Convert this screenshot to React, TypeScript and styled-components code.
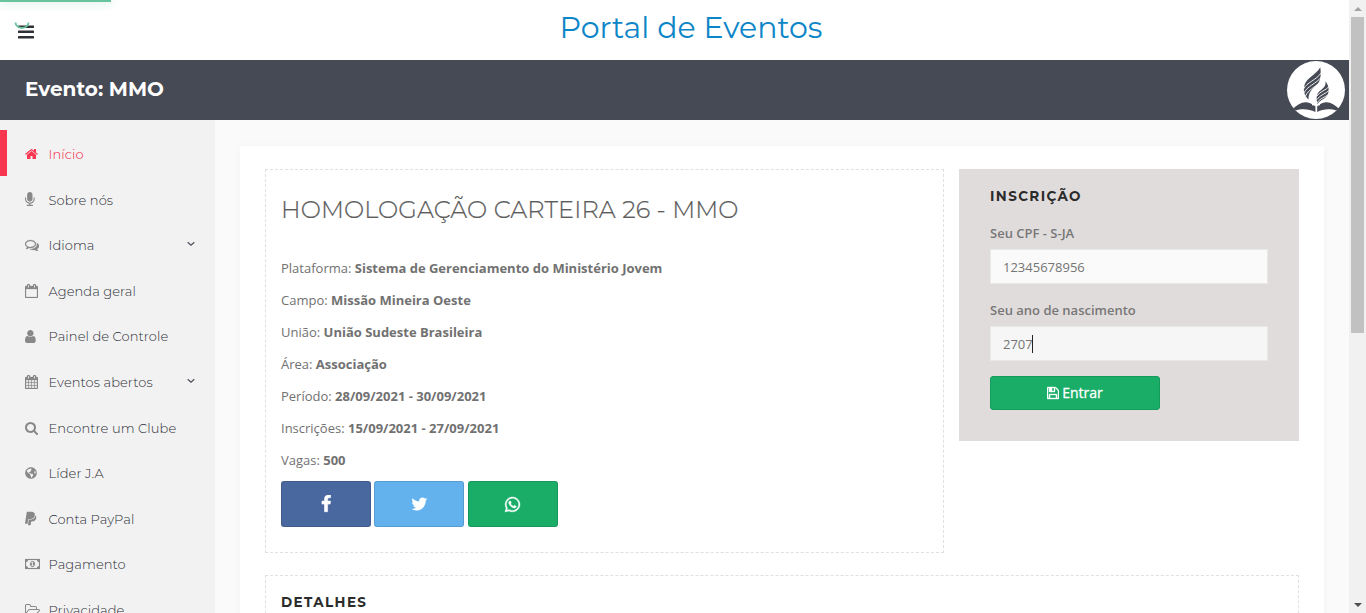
import React from "react";
import styled, { createGlobalStyle } from "styled-components";
import { FaWhatsapp, FaPaypal, FaGlobeAmericas } from "react-icons/fa";

const GlobalStyle = createGlobalStyle`
  * { box-sizing: border-box; }
  html, body { margin: 0; height: 613px; overflow: hidden; }
  body { background: #fafafa; font-family: "Open Sans", sans-serif; font-size: 13px; color: #717171; }
`;

const display = `"Montserrat", "Inter", sans-serif`;

const Shell = styled.div`
  display: flex;
  height: 613px;
  overflow: hidden;
  position: relative;
`;
const Page = styled.div`
  flex: 1;
  display: flex;
  flex-direction: column;
  min-width: 0;
`;

const Progress = styled.div`
  position: absolute;
  top: 0;
  left: 0;
  width: 111px;
  height: 2px;
  background: #68c39f;
  box-shadow: 0 0 10px rgba(104, 195, 159, 0.7);
`;
const Spinner = styled.svg`
  position: absolute;
  top: 14px;
  left: 14px;
`;

const Header = styled.header`
  height: 60px;
  flex: none;
  background: #fff;
  display: grid;
  grid-template-columns: 60px 1fr 27px;
  align-items: center;
`;
const MenuButton = styled.button`
  border: 0;
  background: none;
  padding: 3px 0 0 18px;
  display: flex;
`;
const PortalTitle = styled.h1`
  margin: 0;
  padding-bottom: 5px;
  font: 400 30px/40px ${display};
  color: #0d86c8;
  text-align: center;
`;

const EventBar = styled.div`
  height: 60px;
  flex: none;
  background: #464a54;
  display: flex;
  align-items: center;
  justify-content: space-between;
  padding: 0 4px 0 25px;
`;
const EventName = styled.h2`
  margin: 0;
  padding-bottom: 3px;
  font: 700 20px/30px ${display};
  color: #fff;
`;

const Body = styled.div`
  flex: 1;
  min-height: 0;
  display: flex;
`;
const Sidebar = styled.nav`
  width: 215px;
  flex: none;
  background: #f2f2f2;
  padding-top: 10px;
  overflow: hidden;
`;
const NavItem = styled.a<{ $active?: boolean }>`
  display: flex;
  align-items: center;
  height: 45.6px;
  padding: 2.3px 20px 0 18px;
  border-left: 7px solid ${(p) => (p.$active ? "#f8364f" : "transparent")};
  color: ${(p) => (p.$active ? "#f8364f" : "#888")};
`;
const NavIcon = styled.span`
  width: 23.5px;
  display: flex;
`;
const NavText = styled.span<{ $active?: boolean }>`
  flex: 1;
  white-space: nowrap;
  font: 300 13px/20px ${display};
  letter-spacing: 0.09px;
  color: ${(p) => (p.$active ? "#f8203c" : "#2b2e36")};
`;

const Main = styled.main`
  flex: 1;
  min-width: 0;
  padding: 26px 25px 0;
`;
const Card = styled.section`
  background: #fff;
  height: 600px;
  padding: 23px 25px;
  box-shadow: 0 0 8px rgba(0, 0, 0, 0.03);
`;
const Columns = styled.div`
  display: grid;
  grid-template-columns: 679px 340px;
  gap: 15px;
  align-items: start;
`;
const Box = styled.div`
  border: 1px dashed #e0e0e0;
  padding: 15px;
`;
const EventBox = styled(Box)`
  height: 384px;
`;
const DetailsBox = styled(Box)`
  margin-top: 22px;
  padding-top: 14px;
  height: 200px;
`;
const BoxTitle = styled.h2`
  margin: 0 0 17px;
  font: 300 24px/50px ${display};
  letter-spacing: 0.12px;
  color: #5c5c5c;
  -webkit-text-stroke: 0.2px #5c5c5c;
  white-space: nowrap;
`;
const Info = styled.p`
  margin: 0;
  line-height: 32px;
  b { font-weight: 700; }
`;
const Share = styled.div`
  display: flex;
  gap: 3.4px;
  margin-top: 5px;
`;
const ShareButton = styled.button<{ $bg: string }>`
  width: 90px;
  height: 46px;
  padding: 0;
  display: flex;
  align-items: center;
  justify-content: center;
  color: #fff;
  background: ${(p) => p.$bg};
  border: 1px solid rgba(0, 0, 0, 0.12);
  border-radius: 3px;
`;
const SectionTitle = styled.h3`
  margin: 0;
  font: 700 13.5px/24px ${display};
  letter-spacing: 1.4px;
  color: #2b2b2b;
`;

const Enroll = styled.form`
  background: #e1dcdc;
  height: 272px;
  padding: 15px 31px 0 31px;
`;
const Label = styled.label`
  display: block;
  font-weight: 600;
  line-height: 20px;
  color: #777;
`;
const FieldGroup = styled.div`
  padding-top: 15px;
`;
const FieldGroupSpaced = styled(FieldGroup)`
  padding-top: 16px;
`;
const Field = styled.div<{ $focused?: boolean }>`
  margin-top: 6px;
  height: 35px;
  display: flex;
  align-items: center;
  padding: 0 12px;
  border: 1px solid #e9e8e8;
  background: ${(p) => (p.$focused ? "#f6f6f6" : "#fafafa")};
  color: #757575;
`;
const Caret = styled.span`
  width: 1px;
  height: 18px;
  margin-left: -1px;
  background: #222;
`;
const Submit = styled.button`
  margin-top: 15px;
  width: 170px;
  height: 34px;
  padding: 0 0 1px;
  display: flex;
  align-items: center;
  justify-content: center;
  gap: 3px;
  background: #19ad68;
  border: 1px solid #159b5c;
  border-radius: 3px;
  color: #fff;
  font: 500 14px "Open Sans", sans-serif;
  -webkit-text-stroke: 0.3px #fff;
`;

const Scrollbar = styled.div`
  width: 17px;
  flex: none;
  background: #f1f1f1;
  display: flex;
  flex-direction: column;
  align-items: center;
`;
const ScrollArrow = styled.div`
  height: 17px;
  display: flex;
  align-items: center;
`;
const Thumb = styled.div`
  width: 13px;
  height: 316px;
  background: #c1c1c1;
  margin-bottom: auto;
`;

const CAL_FRAME =
  "M512 448v-288q0-13-9.5-22.5t-22.5-9.5h-64q-13 0-22.5 9.5t-9.5 22.5v288q0 13 9.5 22.5t22.5 9.5h64q13 0 22.5-9.5t9.5-22.5zm768 0v-288q0-13-9.5-22.5t-22.5-9.5h-64q-13 0-22.5 9.5t-9.5 22.5v288q0 13 9.5 22.5t22.5 9.5h64q13 0 22.5-9.5t9.5-22.5zm384-64v1280q0 52-38 90t-90 38h-1408q-52 0-90-38t-38-90v-1280q0-52 38-90t90-38h128v-96q0-66 47-113t113-47h64q66 0 113 47t47 113v96h384v-96q0-66 47-113t113-47h64q66 0 113 47t47 113v96h128q52 0 90 38t38 90z";

const glyphs: Record<string, { x: number; w: number; d: string }> = {
  home: { x: 64, w: 1664, d: "M1472 992v480q0 26-19 45t-45 19h-384v-384h-256v384h-384q-26 0-45-19t-19-45v-480q0-1 .5-3t.5-3l575-474 575 474q1 2 1 6zm223-69l-62 74q-8 9-21 11h-3q-13 0-21-7l-692-577-692 577q-12 8-24 7-13-2-21-11l-62-74q-8-10-7-23.5t11-21.5l719-599q32-26 76-26t76 26l244 204v-195q0-14 9-23t23-9h192q14 0 23 9t9 23v408l219 182q10 8 11 21.5t-7 23.5z" },
  mic: { x: 320, w: 1152, d: "M1472 704v128q0 221-147.5 384.5t-364.5 187.5v132h256q26 0 45 19t19 45-19 45-45 19h-640q-26 0-45-19t-19-45 19-45 45-19h256v-132q-217-24-364.5-187.5t-147.5-384.5v-128q0-26 19-45t45-19 45 19 19 45v128q0 185 131.5 316.5t316.5 131.5 316.5-131.5 131.5-316.5v-128q0-26 19-45t45-19 45 19 19 45zm-256-384v512q0 132-94 226t-226 94-226-94-94-226v-512q0-132 94-226t226-94 226 94 94 226z" },
  comments: { x: 0, w: 1792, d: "M704 384q-153 0-286 52t-211.5 141-78.5 191q0 82 53 158t149 132l97 56-35 84q34-20 62-39l44-31 53 10q78 14 153 14 153 0 286-52t211.5-141 78.5-191-78.5-191-211.5-141-286-52zm0-128q191 0 353.5 68.5t256.5 186.5 94 257-94 257-256.5 186.5-353.5 68.5q-86 0-176-16-124 88-278 128-36 9-86 16h-3q-11 0-20.5-8t-11.5-21q-1-3-1-6.5t.5-6.5 2-6l2.5-5 3.5-5.5 4-5 4.5-5 4-4.5q5-6 23-25t26-29.5 22.5-29 25-38.5 20.5-44q-124-72-195-177t-71-224q0-139 94-257t256.5-186.5 353.5-68.5zm822 1169q10 24 20.5 44t25 38.5 22.5 29 26 29.5 23 25q1 1 4 4.5t4.5 5 4 5 3.5 5.5l2.5 5 2 6 .5 6.5-1 6.5q-3 14-13 22t-22 7q-50-7-86-16-154-40-278-128-90 16-176 16-271 0-472-132 58 4 88 4 161 0 309-45t264-129q125-92 192-212t67-254q0-77-23-152 129 71 204 178t75 230q0 120-71 224.5t-195 176.5z" },
  calendarO: { x: 0, w: 1664, d: CAL_FRAME + "M128 1664h1408v-1024h-1408z" },
  user: { x: 256, w: 1280, d: "M1536 1399q0 109-62.5 187t-150.5 78h-854q-88 0-150.5-78t-62.5-187q0-85 8.5-160.5t31.5-152 58.5-131 94-89 134.5-34.5q131 128 313 128t313-128q76 0 134.5 34.5t94 89 58.5 131 31.5 152 8.5 160.5zm-256-887q0 159-112.5 271.5t-271.5 112.5-271.5-112.5-112.5-271.5 112.5-271.5 271.5-112.5 271.5 112.5 112.5 271.5z" },
  calendar: { x: 0, w: 1664, d: CAL_FRAME + "M128 1664h288v-288h-288zM480 1664h320v-288h-320zM864 1664h320v-288h-320zM1248 1664h288v-288h-288zM128 1312h288v-320h-288zM480 1312h320v-320h-320zM864 1312h320v-320h-320zM1248 1312h288v-320h-288zM128 928h288v-288h-288zM480 928h320v-288h-320zM864 928h320v-288h-320zM1248 928h288v-288h-288z" },
  search: { x: 64, w: 1664, d: "M1216 832q0-185-131.5-316.5t-316.5-131.5-316.5 131.5-131.5 316.5 131.5 316.5 316.5 131.5 316.5-131.5 131.5-316.5zm512 832q0 52-38 90t-90 38q-54 0-90-38l-343-342q-179 124-399 124-143 0-273.5-55.5t-225-150-150-225-55.5-273.5 55.5-273.5 150-225 225-150 273.5-55.5 273.5 55.5 225 150 150 225 55.5 273.5q0 220-124 399l343 343q37 37 37 90z" },
  money: { x: 0, w: 1920, d: "M0 256h1920v1280h-1920zM384 384q0 106-75 181t-181 75v512q106 0 181 75t75 181h1152q0-106 75-181t181-75v-512q-106 0-181-75t-75-181zM960 512q145 0 232 118t88 266-88 266-232 118-232-118-88-266 88-266 232-118zM768 1152h384v-96h-128v-448h-114l-148 137 77 80 55-55v286h-126z" },
  folder: { x: 64, w: 1920, d: "M1845 931q0-35-53-35h-1088q-40 0-85.5 21.5t-71.5 52.5l-294 363q-18 24-18 40 0 35 53 35h1088q40 0 86-22t71-53l294-363q18-22 18-39zm-1141-163h768v-160q0-40-28-68t-68-28h-576q-40 0-68-28t-28-68v-64q0-40-28-68t-68-28h-320q-40 0-68 28t-28 68v853l256-315q44-53 116-87.5t140-34.5zm1269 163q0 62-46 120l-295 363q-43 53-116 87.5t-140 34.5h-1088q-92 0-158-66t-66-158v-960q0-92 66-158t158-66h320q92 0 158 66t66 158v32h544q92 0 158 66t66 158v160h192q54 0 99 24.5t67 70.5q15 32 15 68z" },
  save: { x: 128, w: 1536, d: "M512 1536h768v-384h-768v384zm896 0h128v-896q0-14-10-38.5t-20-34.5l-281-281q-10-10-34-20t-39-10v416q0 40-28 68t-68 28h-576q-40 0-68-28t-28-68v-416h-128v1280h128v-416q0-40 28-68t68-28h832q40 0 68 28t28 68v416zm-384-928v-320q0-13-9.5-22.5t-22.5-9.5h-192q-13 0-22.5 9.5t-9.5 22.5v320q0 13 9.5 22.5t22.5 9.5h192q13 0 22.5-9.5t9.5-22.5zm640 32v928q0 40-28 68t-68 28h-1344q-40 0-68-28t-28-68v-1344q0-40 28-68t68-28h928q40 0 88 20t76 48l280 280q28 28 48 76t20 88z" },
  twitter: { x: 64, w: 1664, d: "M1684 408q-67 98-162 167 1 14 1 42 0 130-38 259.5t-115.5 248.5-184.5 210.5-258 146-323 54.5q-271 0-496-145 35 4 78 4 225 0 401-138-105-2-188-64.5t-114-159.5q33 5 61 5 43 0 85-11-112-23-185.5-111.5t-73.5-205.5v-4q68 38 146 41-66-44-105-115t-39-154q0-88 44-163 121 149 294.5 238.5t371.5 99.5q-8-38-8-74 0-134 94.5-228.5t228.5-94.5q140 0 236 102 109-21 205-78-37 115-142 178 93-10 186-50z" },
  facebook: { x: 384, w: 1024, d: "M1343 12v264h-157q-86 0-116 36t-30 108v189h293l-39 296h-254v759h-306v-759h-255v-296h255v-218q0-186 104-288.5t277-102.5q147 0 228 12z" },
};

const Glyph = ({ name, size = 14, bold = 0 }: { name: string; size?: number; bold?: number }) => {
  const g = glyphs[name];
  return (
    <svg width={(size * g.w) / 1792} height={size} viewBox={`${g.x} 0 ${g.w} 1792`}>
      <path d={g.d} fill="currentColor" fillRule="evenodd" stroke="currentColor" strokeWidth={bold} />
    </svg>
  );
};

const Chevron = () => (
  <svg width="8" height="8" viewBox="0 0 8 8">
    <path d="M0.7 1.2L4 4.3L7.3 1.2" fill="none" stroke="#4b4f58" strokeWidth="1.2" />
  </svg>
);

const Logo = () => (
  <svg width="58" height="58" viewBox="0 0 58 58">
    <circle cx="29" cy="29" r="29" fill="#fff" />
    <g fill="#464a54">
      <path d="M33.300 6.300C34 12 34 17 32 21C29 26 21 29 21.500 38.500C18 35 16 31 17.200 25C19 17 29 14 33.300 6.300Z" />
      <path d="M38.500 20.300C42 25 42.500 30 40.500 34C38 38.500 32 39 30.500 43.500C29.500 39 29 35 31 32C34 28 39.500 27 38.500 20.300Z" />
      <path d="M6 47.500C10 44.500 14 41 19 41.200C23 41.500 26 43.500 28.400 45.200V51C22 47.500 14 47.500 8.500 49.500Z" />
      <path d="M52 47.500C48 44.500 44 41 39 41.200C35 41.500 32.500 43.500 30.200 45.200V51C36 47.500 44 47.500 49.500 49.500Z" />
    </g>
    <g stroke="#fff" strokeWidth="0.900" fill="none">
      <path d="M16.500 28C20 21 29 19.500 34.500 11.500M17 32C20 25 29 23 34.500 16M18.500 35C21 29 28 26 33 21.500" />
      <path d="M30 35C33 30 39 29.500 42 25.500M30 38.500C33 33.500 39 33 42.500 29M30 42C33 37 38 36.500 42 33" />
      <path d="M25 43.600H33" strokeWidth="1.500" />
    </g>
  </svg>
);

const nav: { label: string; icon: React.ReactNode; active?: boolean; more?: boolean }[] = [
  { label: "Início", icon: <Glyph name="home" />, active: true },
  { label: "Sobre nós", icon: <Glyph name="mic" size={15} /> },
  { label: "Idioma", icon: <Glyph name="comments" bold={30} />, more: true },
  { label: "Agenda geral", icon: <Glyph name="calendarO" bold={30} /> },
  { label: "Painel de Controle", icon: <Glyph name="user" size={15} /> },
  { label: "Eventos abertos", icon: <Glyph name="calendar" bold={30} />, more: true },
  { label: "Encontre um Clube", icon: <Glyph name="search" /> },
  { label: "Líder J.A", icon: <FaGlobeAmericas size={12} /> },
  { label: "Conta PayPal", icon: <FaPaypal size={15} preserveAspectRatio="xMinYMid meet" /> },
  { label: "Pagamento", icon: <Glyph name="money" bold={20} /> },
  { label: "Privacidade", icon: <Glyph name="folder" /> },
];

const info = [
  ["Plataforma", "Sistema de Gerenciamento do Ministério Jovem"],
  ["Campo", "Missão Mineira Oeste"],
  ["União", "União Sudeste Brasileira"],
  ["Área", "Associação"],
  ["Período", "28/09/2021 - 30/09/2021"],
  ["Inscrições", "15/09/2021 - 27/09/2021"],
  ["Vagas", "500"],
];

export default function App() {
  return (
    <Shell>
      <GlobalStyle />
      <Page>
        <Header>
          <MenuButton type="button">
            <svg width="16" height="14" viewBox="0 0 16 14" fill="#2f3136">
              <rect width="16" height="2.500" y="0.500" rx=".5" />
              <rect width="16" height="2.500" y="5.500" rx=".5" />
              <rect width="16" height="2.500" y="11" rx=".5" />
            </svg>
          </MenuButton>
          <PortalTitle>Portal de Eventos</PortalTitle>
        </Header>
        <EventBar>
          <EventName>Evento: MMO</EventName>
          <Logo />
        </EventBar>
        <Body>
          <Sidebar>
            {nav.map((n) => (
              <NavItem key={n.label} $active={n.active}>
                <NavIcon>{n.icon}</NavIcon>
                <NavText $active={n.active}>{n.label}</NavText>
                {n.more && <Chevron />}
              </NavItem>
            ))}
          </Sidebar>
          <Main>
            <Card>
              <Columns>
                <EventBox>
                  <BoxTitle>HOMOLOGAÇÃO CARTEIRA 26 - MMO</BoxTitle>
                  {info.map(([k, v]) => (
                    <Info key={k}>
                      {k}: <b>{v}</b>
                    </Info>
                  ))}
                  <Share>
                    <ShareButton type="button" $bg="#4a68a0"><Glyph name="facebook" size={18} bold={60} /></ShareButton>
                    <ShareButton type="button" $bg="#63b2ee"><Glyph name="twitter" size={18} /></ShareButton>
                    <ShareButton type="button" $bg="#19ad68"><FaWhatsapp size={17} stroke="currentColor" strokeWidth={14} /></ShareButton>
                  </Share>
                </EventBox>
                <Enroll>
                  <SectionTitle>INSCRIÇÃO</SectionTitle>
                  <FieldGroup>
                    <Label>Seu CPF - S-JA</Label>
                    <Field>12345678956</Field>
                  </FieldGroup>
                  <FieldGroupSpaced>
                    <Label>Seu ano de nascimento</Label>
                    <Field $focused>2707<Caret /></Field>
                  </FieldGroupSpaced>
                  <Submit type="button"><Glyph name="save" size={14} bold={50} />Entrar</Submit>
                </Enroll>
              </Columns>
              <DetailsBox>
                <SectionTitle>DETALHES</SectionTitle>
              </DetailsBox>
            </Card>
          </Main>
        </Body>
      </Page>
      <Scrollbar>
        <ScrollArrow>
          <svg width="8" height="4" viewBox="0 0 8 4"><path d="M4 0L8 4H0Z" fill="#a3a3a3" /></svg>
        </ScrollArrow>
        <Thumb />
        <ScrollArrow>
          <svg width="8" height="4" viewBox="0 0 8 4"><path d="M4 4L8 0H0Z" fill="#505050" /></svg>
        </ScrollArrow>
      </Scrollbar>
      <Progress />
      <Spinner width="16" height="16" viewBox="0 0 16 16">
        <path d="M1.500 8.500A6.500 5.500 0 0 0 14.500 8.500" fill="none" stroke="#68c39f" strokeWidth="1.800" />
      </Spinner>
    </Shell>
  );
}
